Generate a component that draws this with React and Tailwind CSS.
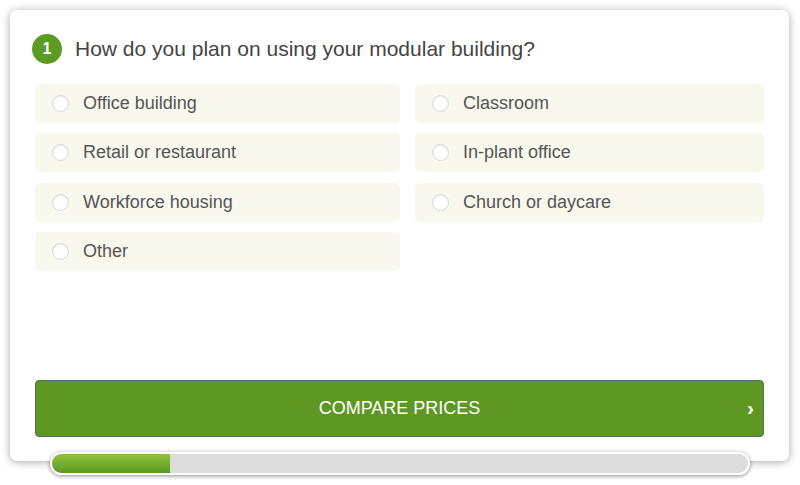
const options = [
  'Office building',
  'Classroom',
  'Retail or restaurant',
  'In-plant office',
  'Workforce housing',
  'Church or daycare',
  'Other',
];

function Option({ label }) {
  return (
    <label className="flex h-[39px] items-center rounded-[5px] bg-[#f9f8ee] pl-[17px] cursor-pointer">
      <span className="h-[17px] w-[17px] rounded-full border border-[#d6d6d6] bg-white shadow-[inset_0_1px_2px_rgba(0,0,0,0.08)]"></span>
      <span className="ml-[14px] text-[18px] text-[#555]">{label}</span>
    </label>
  );
}

export default function App() {
  return (
    <div className="h-[485px] w-[800px] bg-white p-[10px] font-['Liberation_Sans',Arial,sans-serif]">
      <div className="flex h-[451px] w-[779px] flex-col rounded-[7px] bg-white px-[25px] pt-[23px] pb-[24px] shadow-[0_1px_8px_rgba(0,0,0,0.35)]">
        <div className="-ml-[3px] flex items-center">
          <div className="flex h-[30px] w-[30px] items-center justify-center rounded-full bg-[#5b9a23] text-[16px] font-bold text-white">1</div>
          <h2 className="ml-[13px] text-[21px] text-[#444]">How do you plan on using your modular building?</h2>
        </div>

        <div className="mt-[19px] grid grid-cols-[365px_349px] gap-x-[15px] gap-y-[10.5px]">
          {options.map(o => <Option key={o} label={o} />)}
        </div>

        <button className="relative mt-auto flex h-[57px] w-full items-center justify-center rounded-[4px] border border-[#4b6f62] bg-[#5e9823] text-[18px] text-white">
          COMPARE PRICES
          <span className="absolute right-[9px] top-[11px] text-[21px] font-bold">›</span>
        </button>
      </div>

      <div className="relative -mt-[9px] ml-[40px] h-[23px] w-[700px] overflow-hidden rounded-full border-2 border-white bg-[#dcdcdc] shadow-[0_1px_4px_rgba(0,0,0,0.45)]">
        <div className="h-full w-[118px] bg-gradient-to-b from-[#8fc13b] to-[#5b9a22]"></div>
      </div>
    </div>
  );
}
